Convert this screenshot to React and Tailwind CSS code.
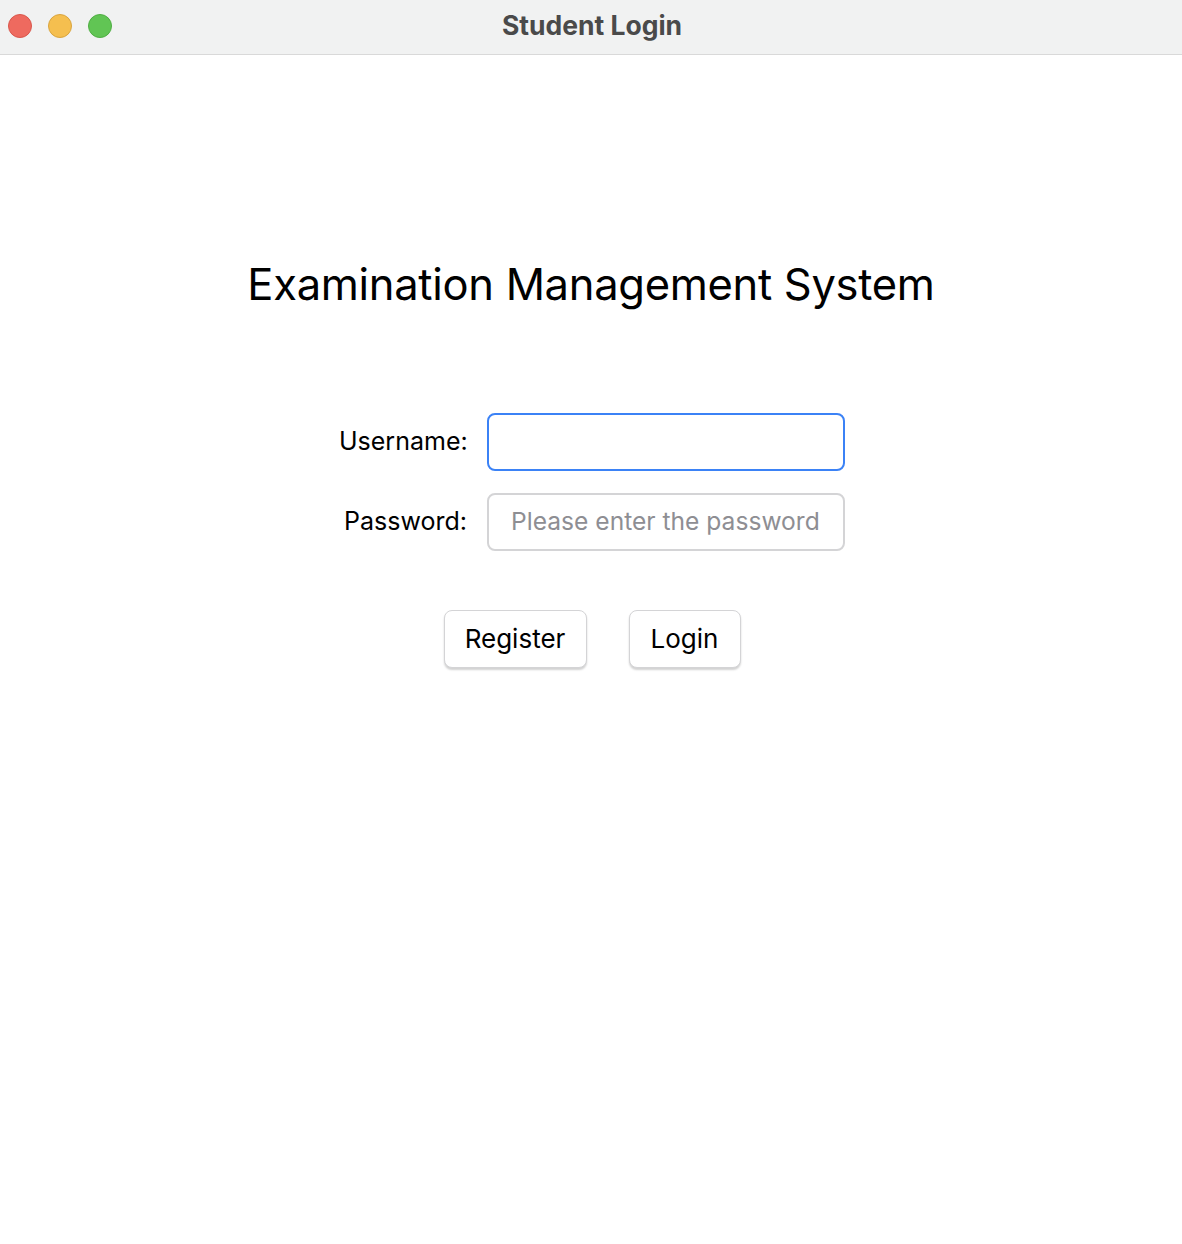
export default function App() {
  return (
    <div className="w-[1182px] h-[1244px] bg-white flex flex-col" style={{ fontFamily: 'Inter, "Noto Sans", sans-serif' }}>
      <div className="h-[55px] bg-[#f1f2f2] border-b border-[#d9d9d9] flex items-center relative shrink-0">
        <div className="absolute left-[8px] top-[14px] flex gap-[16px]">
          <div className="w-[24px] h-[24px] rounded-full bg-[#ee6a5f] border border-[#d9574c]" />
          <div className="w-[24px] h-[24px] rounded-full bg-[#f5bf4f] border border-[#d9a53f]" />
          <div className="w-[24px] h-[24px] rounded-full bg-[#61c554] border border-[#4fae43]" />
        </div>
        <div className="w-full text-center text-[26.5px] font-bold text-[#4a4a4a] leading-none pb-[3px] pl-[2px]">Student Login</div>
      </div>
      <div className="flex flex-col items-center">
        <h1 className="mt-[208px] text-[43.5px] leading-none text-black tracking-[-0.3px]">Examination Management System</h1>
        <div className="mt-[106px] flex flex-col gap-[22px] pl-[2px]">
          <div className="flex items-center gap-[20px]">
            <label className="w-[128px] text-right text-[25px] text-black">Username:</label>
            <div className="w-[358px] h-[58px] rounded-[8px] border-2 border-[#3b82f6] bg-white" />
          </div>
          <div className="flex items-center gap-[20px]">
            <label className="w-[128px] text-right text-[25px] text-black">Password:</label>
            <div className="w-[358px] h-[58px] rounded-[8px] border-2 border-[#d4d4d6] bg-white flex items-center pl-[22px] text-[24.6px] text-[#8e8e93]">Please enter the password</div>
          </div>
        </div>
        <div className="mt-[59px] flex gap-[42px] pl-[2px]">
          <button className="w-[143px] h-[58px] rounded-[8px] border border-[#d4d4d6] bg-white text-[26px] text-black shadow-[0_2px_2px_rgba(0,0,0,0.18)]">Register</button>
          <button className="w-[112px] h-[58px] rounded-[8px] border border-[#d4d4d6] bg-white text-[26px] text-black shadow-[0_2px_2px_rgba(0,0,0,0.18)]">Login</button>
        </div>
      </div>
    </div>
  );
}
